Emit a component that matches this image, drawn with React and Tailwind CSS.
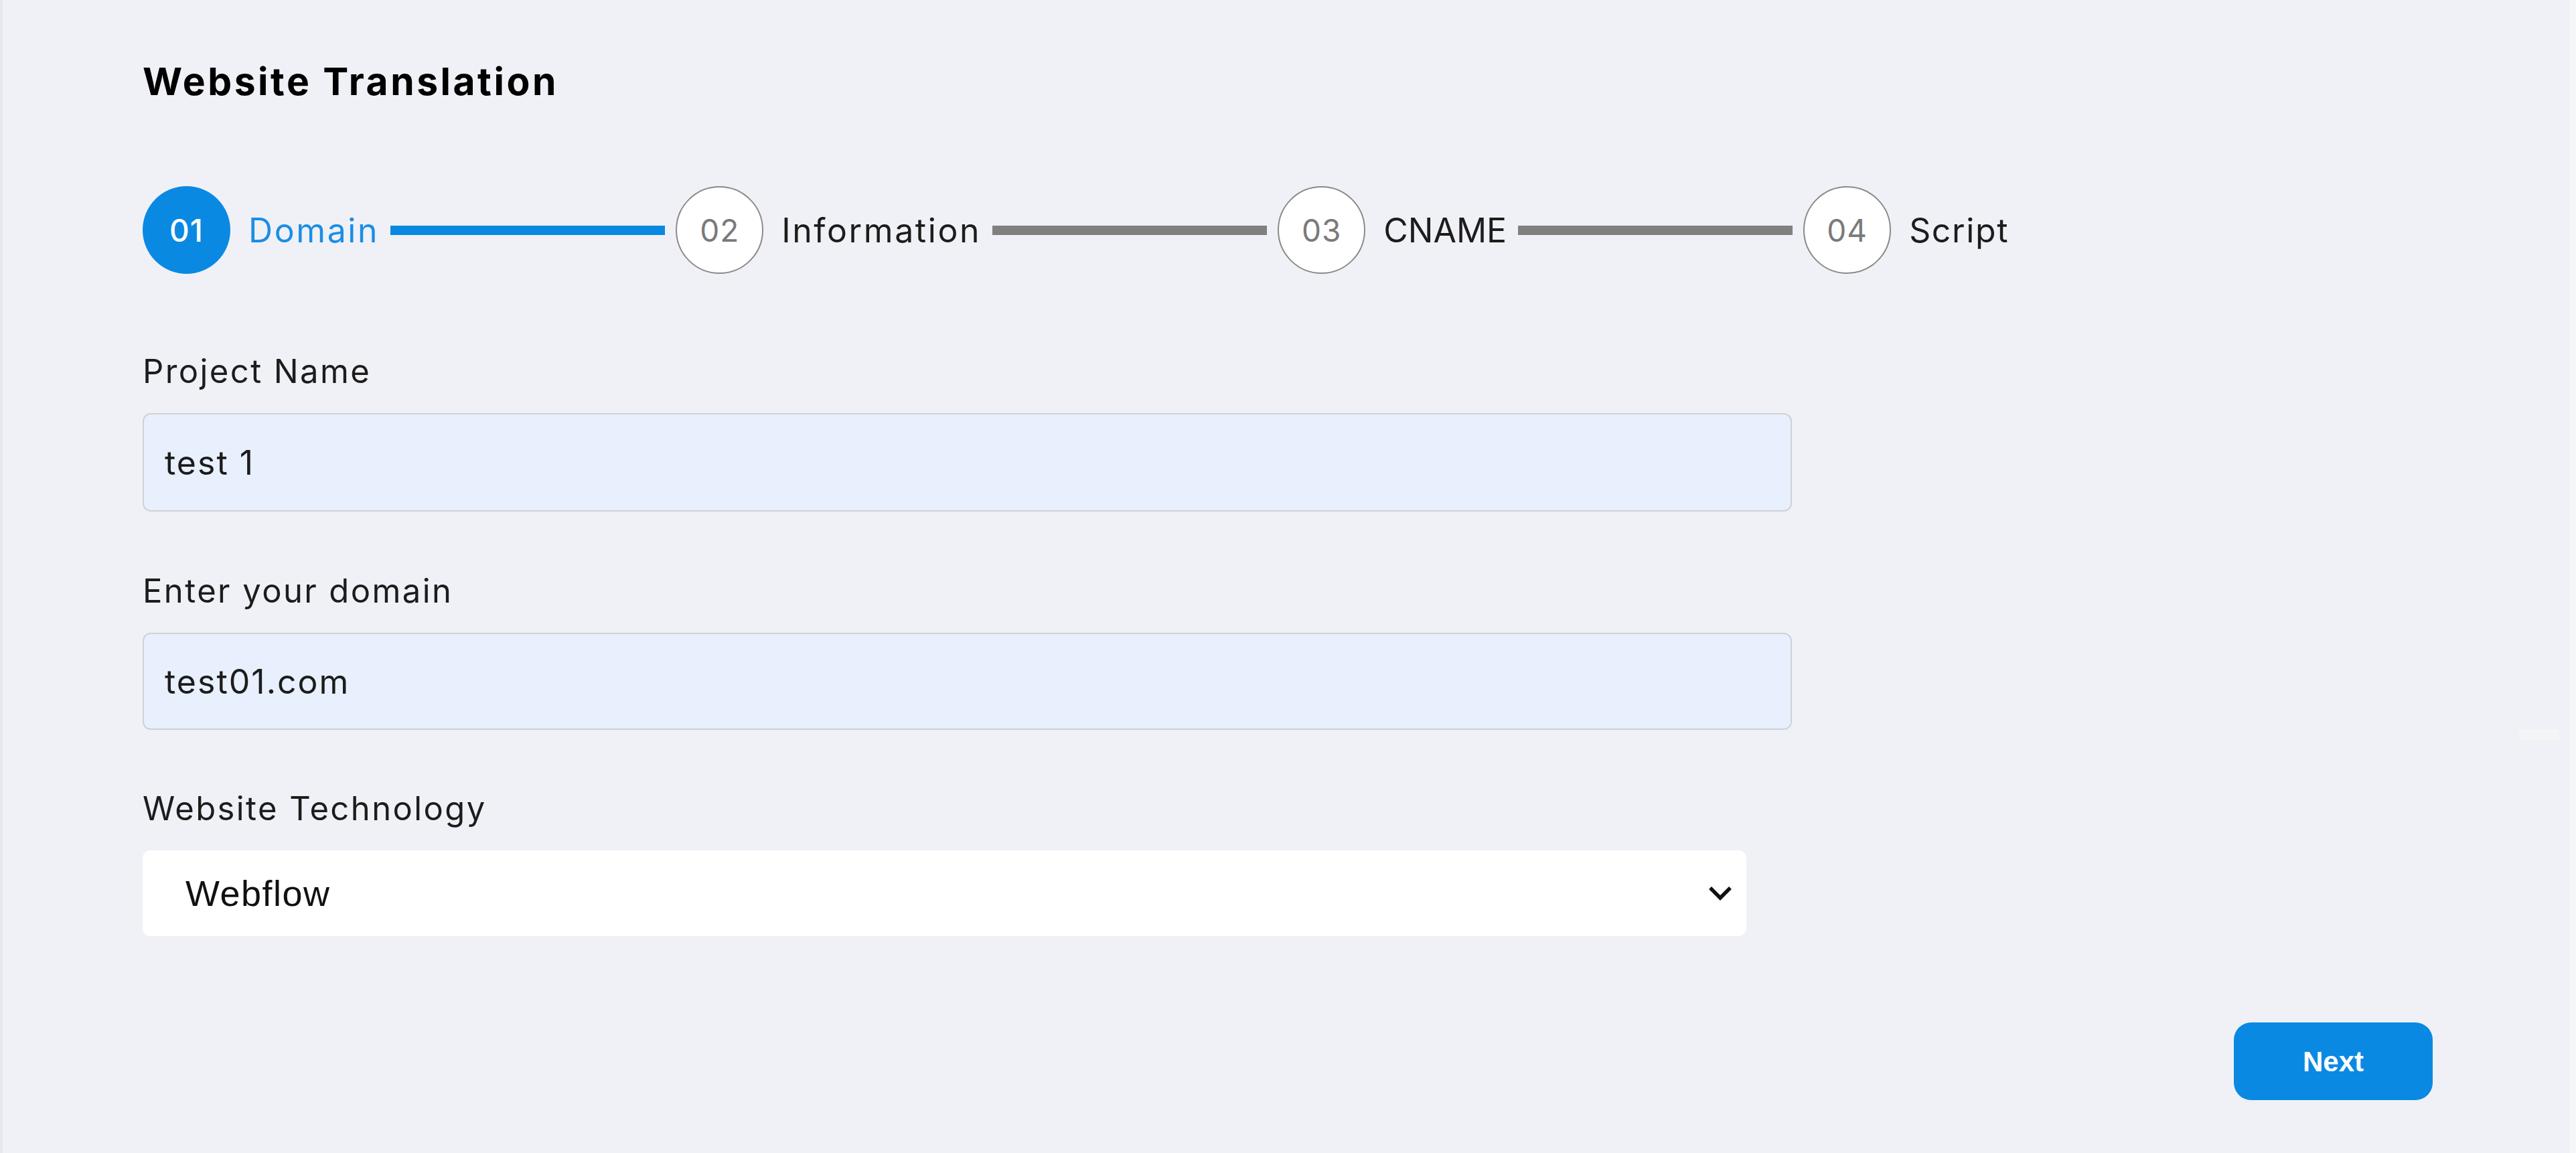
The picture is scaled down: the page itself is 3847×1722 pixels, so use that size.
import React from "react";

const STEPS = [
  { no: "01", label: "Domain", track: "tracking-[2.6px]" },
  { no: "02", label: "Information", track: "tracking-[2.6px]" },
  { no: "03", label: "CNAME", track: "tracking-[0px]" },
  { no: "04", label: "Script", track: "tracking-[1.6px]" },
];

const BLUE = "bg-[#0a89e3]";

export default function App() {
  const current = 0;

  return (
    <div className="relative flex min-h-screen w-full border-l-4 border-r-[9px] border-l-[#e6e7ec] border-r-[#f6f6f8] bg-[#f0f1f6] font-['Inter',sans-serif] text-[#1c1c1c]">
      <main className="flex flex-1 flex-col pl-[209px] pr-[205px] pt-[93px]">
        <h1 className="text-[57px] font-bold leading-none tracking-[3.5px] text-black">Website Translation</h1>

        {/* ── Stepper ── */}
        <div className="mt-[127px] flex h-[133px] items-center">
          {STEPS.map((s, i) => (
            <React.Fragment key={s.no}>
              {i > 0 && (
                <div className={`ml-[17px] mr-[16px] h-[14px] w-[410px] ${i - 1 <= current ? BLUE : "bg-[#808080]"}`} />
              )}
              <div
                className={`flex h-[131px] w-[131px] shrink-0 items-center justify-center rounded-full text-[46px] leading-none tracking-[1px] ${
                  i === current
                    ? `${BLUE} font-medium text-white`
                    : "border-2 border-[#8a8a8a] bg-white text-[#7a7a7a]"
                }`}
              >
                {s.no}
              </div>
              <span className={`ml-[27px] text-[50px] leading-none ${s.track} ${i === current ? "text-[#1a8ee6]" : "text-[#1c1c1c]"}`}>
                {s.label}
              </span>
            </React.Fragment>
          ))}
        </div>

        {/* ── Form ── */}
        <label className="mt-[120px] text-[49px] leading-none tracking-[2.4px]">Project Name</label>
        <input
          readOnly
          defaultValue="test 1"
          className="mt-[38px] h-[147px] w-[2463px] rounded-[12px] border-2 border-[#cfd1d6] bg-[#e8f0fe] pl-[31px] text-[50px] tracking-[2px] text-[#1c1c1c] outline-none"
        />

        <label className="mt-[94px] text-[49px] leading-none tracking-[2.4px]">Enter your domain</label>
        <input
          readOnly
          defaultValue="test01.com"
          className="mt-[38px] h-[145px] w-[2463px] rounded-[12px] border-2 border-[#cfd1d6] bg-[#e8f0fe] pl-[31px] text-[50px] tracking-[2px] text-[#1c1c1c] outline-none"
        />

        <label className="mt-[93px] text-[49px] leading-none tracking-[2.4px]">Website Technology</label>
        <div className="mt-[38px] flex h-[128px] w-[2395px] items-center justify-between rounded-[12px] bg-white pl-[64px] pr-[21px] font-['Liberation_Sans',Arial,sans-serif] text-[54px] tracking-[1.5px] text-[#111]">
          <span>Webflow</span>
          <svg width="36" height="22" viewBox="0 0 36 22" fill="none">
            <path d="M3 3l15 15 15-15" stroke="#111" strokeWidth="5.5" />
          </svg>
        </div>

        <button className={`mt-[129px] flex h-[116px] w-[297px] items-center justify-center self-end rounded-[26px] ${BLUE} font-['Liberation_Sans',Arial,sans-serif] text-[42px] font-semibold text-white`}>
          Next
        </button>
      </main>

      {/* scroll handle remnant at the right edge */}
      <span className="absolute right-[16px] top-[1089px] h-[16px] w-[60px] rounded-[2px] bg-[#f5f5f7]" />
    </div>
  );
}
